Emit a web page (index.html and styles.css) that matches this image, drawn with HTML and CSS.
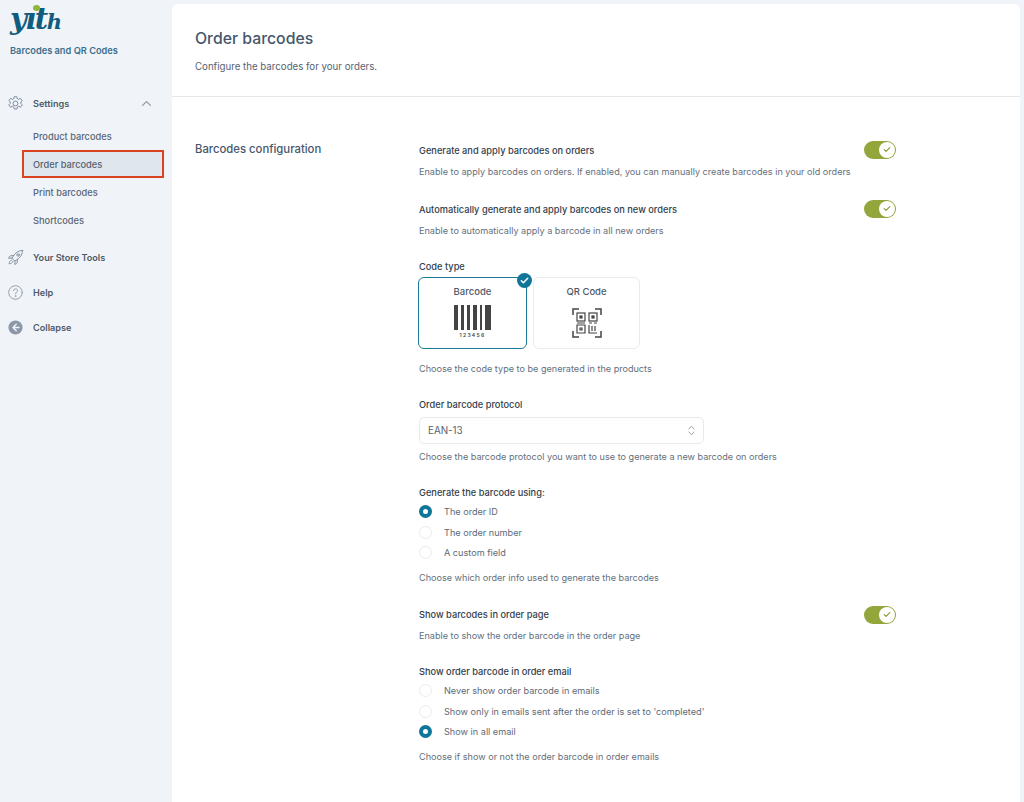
FILE: index.html
```html
<!DOCTYPE html>
<html lang="en">
<head>
<meta charset="utf-8">
<title>Order barcodes</title>
<link rel="stylesheet" href="styles.css">
</head>
<body>
<div class="app">
  <aside class="sidebar">
    <div class="logo"><span class="logo-word">yıt<span class="logo-h">h</span></span><span class="logo-dot"></span></div>
    <div class="plugin">Barcodes and QR Codes</div>
    <nav class="nav">
      <div class="nav-item nav-settings">
        <svg class="nav-icon" viewBox="0 0 24 24" fill="none" stroke="#7d8a99" stroke-width="1.4" stroke-linejoin="round"><path d="M10 2.5h4l.6 2.9 1.8.8 2.5-1.6 2.6 3.2-1.9 2.1.2 2-.2 0 2 2-2.4 3.4-2.6-1.4-1.8.9-.7 2.9h-4l-.7-2.9-1.8-.9-2.6 1.4-2.4-3.4 2-2 0-2-1.9-2.1 2.6-3.2 2.5 1.6 1.8-.8z"/><circle cx="12" cy="12" r="3.4"/></svg>
        <span class="nav-label">Settings</span>
        <svg class="chev" viewBox="0 0 12 8" fill="none" stroke="#8d99a6" stroke-width="1.4" stroke-linecap="round" stroke-linejoin="round"><path d="M1.500 6.200 6 1.800l4.500 4.400"/></svg>
      </div>
      <div class="sub">
        <a class="sub-item">Product barcodes</a>
        <a class="sub-item active">Order barcodes</a>
        <a class="sub-item">Print barcodes</a>
        <a class="sub-item">Shortcodes</a>
      </div>
      <div class="nav-item nav-tools">
        <svg class="nav-icon" viewBox="0 0 24 24" fill="none" stroke="#7d8a99" stroke-width="1.3" stroke-linejoin="round" stroke-linecap="round"><path d="M22 2c-5 .2-9 2.400-12 6.400L7 13l4 4 4.600-3c4-3 6.200-7 6.400-12z"/><circle cx="15.600" cy="8.400" r="1.800"/><path d="M9 9.200 4.600 9.600 2 13l5-.2M14.800 15l-.4 4.400L11 22l.2-5M6.400 15.600C4.400 16.400 3.200 18.400 3 21c2.600-.2 4.600-1.400 5.400-3.400"/></svg>
        <span class="nav-label">Your Store Tools</span>
      </div>
      <div class="nav-item">
        <svg class="nav-icon" viewBox="0 0 24 24" fill="none" stroke="#8d99a6" stroke-width="1.3" stroke-linecap="round"><circle cx="12" cy="12" r="9.600"/><path d="M9.200 9.400c.2-1.700 1.400-2.600 2.900-2.600 1.600 0 2.800 1 2.800 2.400 0 2.200-2.900 2.400-2.900 4.600"/><circle cx="12" cy="17" r=".5"/></svg>
        <span class="nav-label">Help</span>
      </div>
      <div class="nav-item">
        <svg class="nav-icon" viewBox="0 0 24 24"><circle cx="12" cy="12" r="10" fill="#8b98a8"/><path d="M13 7.500 8.500 12l4.500 4.500M9 12h8" fill="none" stroke="#f0f4f9" stroke-width="2" stroke-linecap="round" stroke-linejoin="round"/></svg>
        <span class="nav-label">Collapse</span>
      </div>
    </nav>
  </aside>

  <main class="panel">
    <header class="head">
      <h1 class="title">Order barcodes</h1>
      <p class="subtitle">Configure the barcodes for your orders.</p>
    </header>
    <section class="config">
      <h2 class="section-title">Barcodes configuration</h2>
      <div class="fields">
        <div class="field toggle-field f-first">
          <div><div class="label">Generate and apply barcodes on orders</div>
          <div class="desc">Enable to apply barcodes on orders. If enabled, you can manually create barcodes in your old orders</div></div>
          <span class="toggle"><span class="knob"><svg viewBox="0 0 10 8" fill="none" stroke="#8a9a3c" stroke-width="1.5" stroke-linecap="round" stroke-linejoin="round"><path d="M1.500 4.200 3.800 6.300 8.500 1.700"/></svg></span></span>
        </div>
        <div class="field toggle-field f-auto">
          <div><div class="label">Automatically generate and apply barcodes on new orders</div>
          <div class="desc">Enable to automatically apply a barcode in all new orders</div></div>
          <span class="toggle"><span class="knob"><svg viewBox="0 0 10 8" fill="none" stroke="#8a9a3c" stroke-width="1.5" stroke-linecap="round" stroke-linejoin="round"><path d="M1.500 4.200 3.800 6.300 8.500 1.700"/></svg></span></span>
        </div>
        <div class="field f-code">
          <div class="label">Code type</div>
          <div class="cards">
            <div class="card card-on">
              <span class="badge"><svg viewBox="0 0 10 8" fill="none" stroke="#fff" stroke-width="1.700" stroke-linecap="round" stroke-linejoin="round"><path d="M1.300 4.200 3.700 6.500 8.700 1.500"/></svg></span>
              <div class="card-name">Barcode</div>
              <div class="bars"><i class="w4"></i><i class="w3"></i><i class="w3"></i><i class="w4"></i><i class="w2"></i><i class="w6"></i></div>
              <div class="digits">123456</div>
            </div>
            <div class="card card-off">
              <div class="card-name">QR Code</div>
              <svg class="qr" viewBox="0 0 30 30" fill="none" stroke="#444" stroke-width="1.200"><path stroke-width="1.500" d="M1 7V1h6M23 1h6v6M1 23v6h6M29 23v6h-6"/><rect x="5" y="5" width="8" height="8"/><rect x="8" y="8" width="2" height="2" fill="#444"/><rect x="17" y="5" width="8" height="8"/><rect x="20" y="8" width="2" height="2" fill="#444"/><path d="M5 15h8M17 15h3M22 15h3M5 17h8v8H5zM8 20h2v2H8zM17 17v8h8M20 18v5M23 18v5"/></svg>
            </div>
          </div>
          <div class="desc d-code">Choose the code type to be generated in the products</div>
        </div>
        <div class="field f-proto">
          <div class="label">Order barcode protocol</div>
          <div class="select"><span>EAN-13</span>
            <svg class="updown" viewBox="0 0 8 12" fill="none" stroke="#8d99a6" stroke-width="1.100" stroke-linecap="round" stroke-linejoin="round"><path d="M1 4.200 4 1.300l3 2.900M1 7.800l3 2.900 3-2.900"/></svg>
          </div>
          <div class="desc">Choose the barcode protocol you want to use to generate a new barcode on orders</div>
        </div>
        <div class="field f-using">
          <div class="label">Generate the barcode using:</div>
          <div class="radios">
            <div class="radio-row"><span class="radio on"></span>The order ID</div>
            <div class="radio-row"><span class="radio"></span>The order number</div>
            <div class="radio-row"><span class="radio"></span>A custom field</div>
          </div>
          <div class="desc d-radios">Choose which order info used to generate the barcodes</div>
        </div>
        <div class="field toggle-field f-show">
          <div><div class="label">Show barcodes in order page</div>
          <div class="desc">Enable to show the order barcode in the order page</div></div>
          <span class="toggle"><span class="knob"><svg viewBox="0 0 10 8" fill="none" stroke="#8a9a3c" stroke-width="1.5" stroke-linecap="round" stroke-linejoin="round"><path d="M1.500 4.200 3.800 6.300 8.500 1.700"/></svg></span></span>
        </div>
        <div class="field f-email">
          <div class="label">Show order barcode in order email</div>
          <div class="radios">
            <div class="radio-row"><span class="radio"></span>Never show order barcode in emails</div>
            <div class="radio-row"><span class="radio"></span>Show only in emails sent after the order is set to 'completed'</div>
            <div class="radio-row"><span class="radio on"></span>Show in all email</div>
          </div>
          <div class="desc d-radios">Choose if show or not the order barcode in order emails</div>
        </div>
      </div>
    </section>
  </main>
</div>
</body>
</html>
```
FILE: styles.css
```css
* { box-sizing: border-box; }
html, body { margin: 0; height: 100%; }
body {
  background: #f0f4f9;
  font-family: Inter, "Liberation Sans", sans-serif;
  color: #4a5768;
  overflow: hidden;
}
.app { display: flex; height: 802px; }

.sidebar { width: 172px; flex: none; }
.logo { position: relative; height: 43px; padding: 2px 0 0 10px; }
.logo-word {
  display: block;
  font-family: "DejaVu Serif", serif;
  font-style: italic;
  font-weight: 700;
  font-size: 29px;
  line-height: 34px;
  letter-spacing: -1.5px;
  color: #0f5c7e;
}
.logo-h { font-size: 21px; }
.logo-dot {
  position: absolute; left: 33px; top: 5px;
  width: 7px; height: 6px; border-radius: 50%;
  background: #8fb53a;
}
.plugin { padding-left: 10px; font-size: 9.250px; line-height: 16px; font-weight: 600; color: #3b6f8c; }
.nav { margin-top: 26px; }
.nav-item {
  display: flex; align-items: center;
  height: 35px; padding-left: 7px;
}
.nav-settings { height: 36px; padding-right: 20px; }
.nav-tools { margin-top: 6px; }
.nav-icon { width: 17px; height: 17px; flex: none; margin-right: 9px; }
.nav-label { font-size: 9.150px; font-weight: 600; color: #4e5a68; }
.chev { width: 11px; height: 7px; margin-left: auto; }
.sub { margin-top: 1px; padding-left: 22px; width: 164px; }
.sub-item {
  display: flex; align-items: center;
  height: 28px; padding-left: 11px;
  font-size: 9.250px; font-weight: 500; color: #5a6675;
}
.sub-item.active {
  background: #dfe6ee;
  outline: 2px solid #d9431e;
  outline-offset: -2px;
  color: #56616f;
}

.panel {
  width: 848px; margin-top: 4px; height: 798px;
  background: #fff;
  border-radius: 6px 6px 0 0;
}
.head { height: 92.500px; border-bottom: 1px solid #e4e8ec; padding: 24px 23px 0; }
.title { margin: 0; font-size: 15.800px; line-height: 22px; font-weight: 500; color: #46566a; }
.subtitle { margin: 9px 0 0; font-size: 9.700px; line-height: 16px; color: #566271; }

.config { display: flex; padding-left: 23px; }
.section-title {
  width: 224px; flex: none;
  margin: 44px 0 0;
  font-size: 11.300px; line-height: 16px; font-weight: 500; color: #46566a;
}
.fields { width: 477px; }
.label { margin-top: -1px; font-size: 9.250px; line-height: 14px; font-weight: 500; color: #333e4b; }
.desc { font-size: 9.100px; line-height: 14px; color: #656f7c; margin-top: 7px; }
.toggle-field { display: flex; justify-content: space-between; align-items: flex-start; }
.toggle {
  display: flex; align-items: center; justify-content: flex-end;
  width: 32px; height: 18px; padding-right: 1px; margin-top: -4px;
  border-radius: 9px; background: #93a63c;
}
.knob {
  display: flex; align-items: center; justify-content: center;
  width: 16px; height: 16px; border-radius: 50%; background: #fff;
}
.knob svg { width: 8px; height: 7px; }

.f-first { margin-top: 48px; }
.f-auto { margin-top: 25px; }
.f-code { margin-top: 23px; }
.f-proto { margin-top: 23px; }
.f-using { margin-top: 23px; }
.f-show { margin-top: 24px; }
.f-show .toggle { margin-top: -3px; }
.f-email { margin-top: 23px; }

.cards { display: flex; gap: 6px; margin: 3px 0 0 -1px; }
.card {
  position: relative;
  height: 72px;
  padding-top: 7px;
  border-radius: 6px;
  display: flex; flex-direction: column; align-items: center;
}
.card-off { width: 107px; border: 1px solid #e8ebef; }
.card-on { width: 109px; border: 1.500px solid #1a7a98; }
.card-name { font-size: 9.500px; line-height: 13px; font-weight: 500; color: #4e5a68; }
.badge {
  position: absolute; right: -6px; top: -5px;
  display: flex; align-items: center; justify-content: center;
  width: 15px; height: 15px; border-radius: 50%;
  background: #0f7699;
}
.badge svg { width: 9px; height: 7px; }
.bars { display: flex; gap: 3px; height: 25px; margin-top: 7px; }
.bars i { display: block; background: #444; }
.w2 { width: 2px; }
.w3 { width: 3px; }
.w4 { width: 4px; }
.w6 { width: 6px; }
.digits { font-size: 5px; line-height: 8px; letter-spacing: 1.300px; font-weight: 600; color: #444; margin-top: 1px; }
.qr { width: 30px; height: 30px; margin-top: 10px; }
.d-code { margin-top: 13px; }

.select {
  display: flex; align-items: center; justify-content: space-between;
  width: 285px; height: 27px;
  margin-top: 5px; padding: 0 8px;
  border: 1px solid #e6e9ed; border-radius: 5px;
  font-size: 9.800px; color: #566271;
}
.select + .desc { margin-top: 6px; }
.updown { width: 7px; height: 11px; }

.radios { margin-top: 2px; }
.radio-row {
  display: flex; align-items: center;
  height: 20.400px;
  font-size: 9.150px; color: #5e6976;
}
.radio {
  flex: none;
  width: 13px; height: 13px; margin-right: 12px;
  border: 1px solid #e9ecef; border-radius: 50%;
  background: #fff;
}
.radio.on { border: 4px solid #0f7699; }
.d-radios { margin-top: 8px; }
```
